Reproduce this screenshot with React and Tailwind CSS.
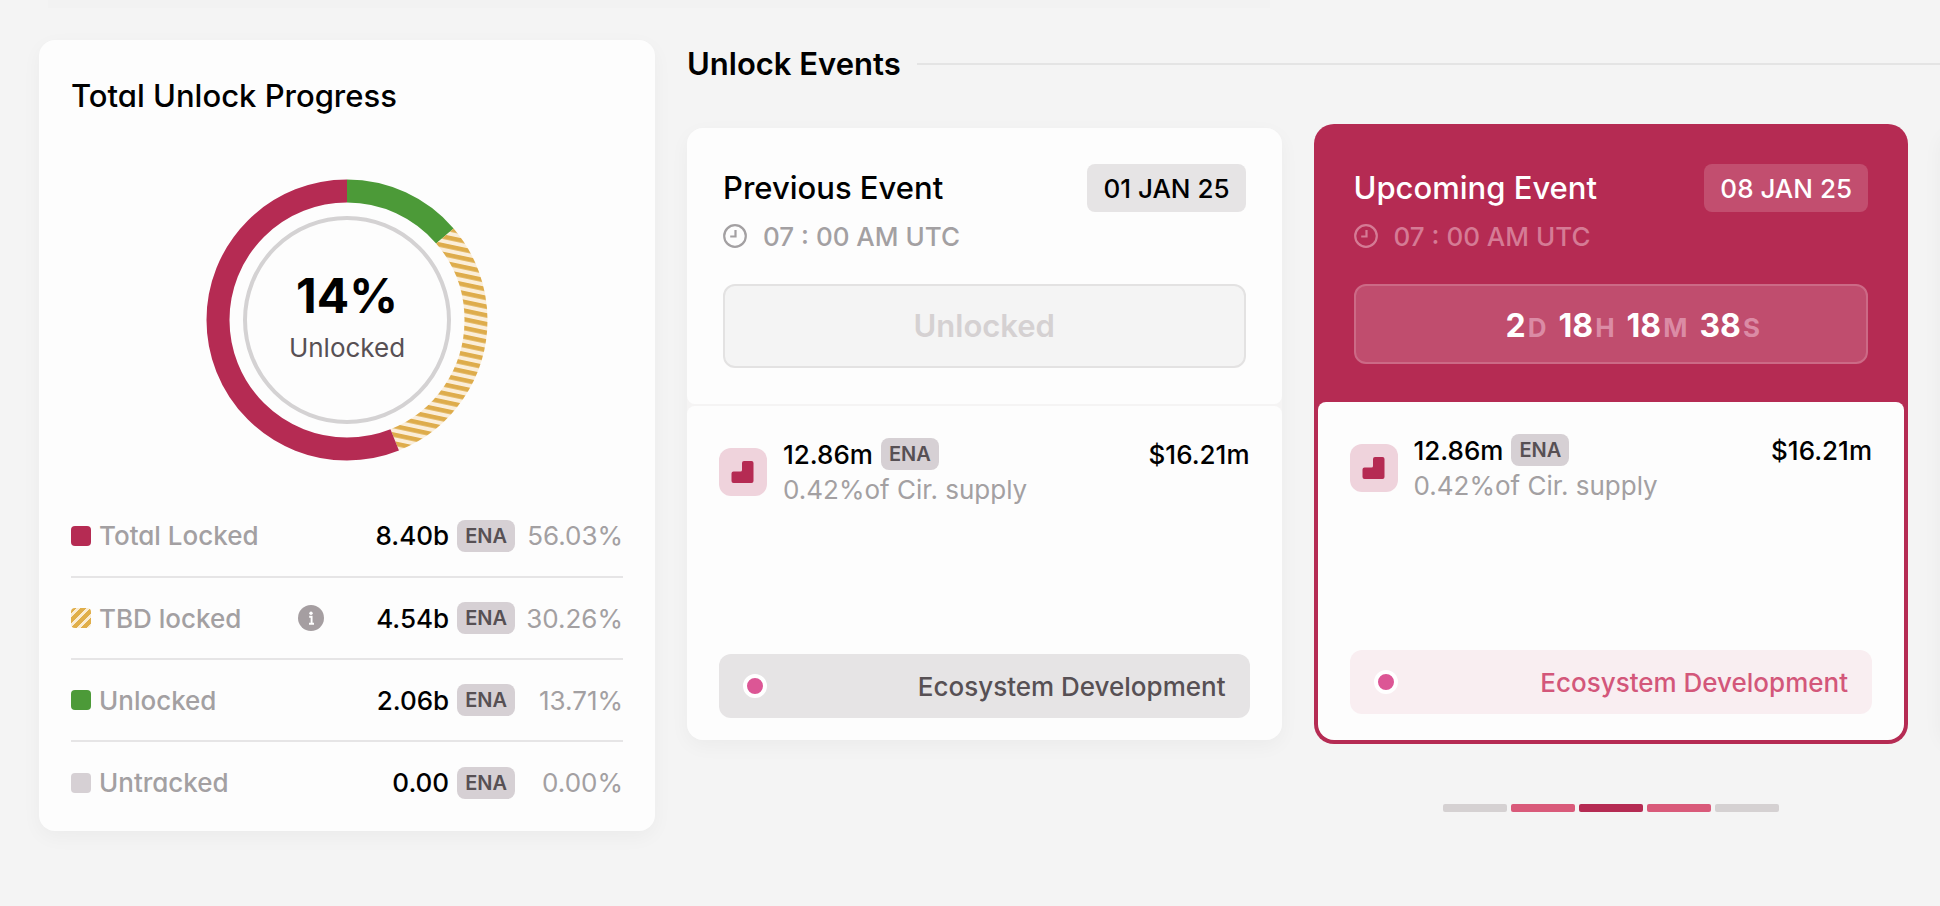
const rows = [
  { label: "Total Locked", value: "8.40b", pct: "56.03%", swatch: "bg-[#b52b53]" },
  {
    label: "TBD locked",
    value: "4.54b",
    pct: "30.26%",
    swatch: "bg-[repeating-linear-gradient(135deg,#e0ae4a_0px,#e0ae4a_4px,#faecd4_4px,#faecd4_7px)]",
    info: true,
  },
  { label: "Unlocked", value: "2.06b", pct: "13.71%", swatch: "bg-[#4c9a38]" },
  { label: "Untracked", value: "0.00", pct: "0.00%", swatch: "bg-[#d6d0d4]" },
];

const pages = ["bg-[#d5d1d2]", "bg-[#d95a7a]", "bg-[#b52b53]", "bg-[#d95a7a]", "bg-[#d5d1d2]"];

function Badge() {
  return (
    <span className="flex h-8 items-center rounded-lg bg-[#d6d0d4] px-2 text-xl font-semibold text-[#575054]">
      ENA
    </span>
  );
}

function Arc({ from, to, color }) {
  const gap = 100 - (to - from);
  return (
    <circle
      cx="142"
      cy="141"
      r="129"
      fill="none"
      stroke={color}
      strokeWidth="23"
      pathLength="100"
      strokeDasharray={`${to - from} ${gap}`}
      strokeDashoffset={-from}
      transform="rotate(-90 142 141)"
    />
  );
}

function Donut() {
  return (
    <div className="grid place-items-center">
      <svg className="col-start-1 row-start-1" width="284" height="282" viewBox="0 0 284 282" aria-hidden="true">
        <defs>
          <pattern id="stripes" width="8.5" height="8.5" patternUnits="userSpaceOnUse" patternTransform="rotate(102)">
            <rect width="8.5" height="8.5" fill="#fbeed9" />
            <rect width="8.5" height="4.5" fill="#deac4b" />
          </pattern>
        </defs>
        <Arc from={0} to={13.71} color="#4c9a38" />
        <Arc from={13.71} to={43.97} color="url(#stripes)" />
        <Arc from={43.97} to={100} color="#b52b53" />
        <circle cx="142" cy="141" r="102" fill="none" stroke="#d4d2d3" strokeWidth="4" />
      </svg>
      <div className="col-start-1 row-start-1 flex flex-col items-center">
        <span className="text-5xl leading-14 font-bold">14%</span>
        <span className="text-[26px] leading-12 text-[#575054]">Unlocked</span>
      </div>
    </div>
  );
}

function InfoIcon() {
  return (
    <svg width="26" height="26" viewBox="0 0 26 26" aria-hidden="true">
      <circle cx="13" cy="13" r="13" fill="#a59ea1" />
      <circle cx="13" cy="8.3" r="1.7" fill="#fff" />
      <path d="M11.2 11.8h2.4v6.2M11 18.7h5" fill="none" stroke="#fff" strokeWidth="1.9" />
    </svg>
  );
}

function ClockIcon() {
  return (
    <svg width="24" height="24" viewBox="0 0 24 24" fill="none" stroke="currentColor" strokeWidth="2.2" aria-hidden="true">
      <circle cx="12" cy="12" r="10.8" />
      <path d="M12.5 6v6.5H7.2" />
    </svg>
  );
}

function AllocationIcon() {
  return (
    <span className="flex size-12 items-center justify-center rounded-xl bg-[#efd3dc]">
      <svg width="24" height="24" viewBox="0 0 24 24" fill="#b52b53" aria-hidden="true">
        <path d="M13 1h7.5a2 2 0 0 1 2 2v18a2 2 0 0 1-2 2h-18a2 2 0 0 1-2-2v-7.5a2 2 0 0 1 2-2h7a1.500 1.500 0 0 0 1.500-1.500V3a2 2 0 0 1 2-2z" />
      </svg>
    </span>
  );
}

function Allocation({ bar, text }) {
  return (
    <>
      <div className="flex items-center gap-4">
        <AllocationIcon />
        <div className="flex-1">
          <div className="flex h-9 items-center gap-2">
            <span className="text-[26px] font-medium">12.86m</span>
            <Badge />
            <span className="ml-auto text-[26px] font-medium">$16.21m</span>
          </div>
          <div className="text-[26px] leading-9 text-[#a3a0a2]">0.42%of Cir. supply</div>
        </div>
      </div>
      <div className={`mt-auto flex h-16 items-center justify-between rounded-xl px-6 ${bar}`}>
        <span className="size-6 rounded-full border-4 border-white bg-[#dc5695]" />
        <span className={`text-[26px] font-medium ${text}`}>Ecosystem Development</span>
      </div>
    </>
  );
}

function EventHead({ title, date, dateStyle, timeStyle }) {
  return (
    <>
      <div className="flex items-center justify-between">
        <h3 className="text-[31px] leading-12 font-medium">{title}</h3>
        <span className={`flex h-12 items-center rounded-lg px-4 text-[26px] font-medium ${dateStyle}`}>{date}</span>
      </div>
      <div className={`flex h-12 items-center gap-4 text-[26px] font-medium ${timeStyle}`}>
        <ClockIcon />
        07 : 00 AM UTC
      </div>
    </>
  );
}

export default function App() {
  return (
    <div className="min-h-screen overflow-hidden bg-[#f4f4f4] font-['Inter','Liberation_Sans',sans-serif] text-black [font-feature-settings:'cv11']">
      <div className="ml-12 h-2 w-[63%] bg-[#f2f2f2]" />
      <main className="flex items-start gap-8 pt-8 pl-[39px]">
        <section className="w-[616px] shrink-0 rounded-2xl bg-[#fdfdfd] px-8 pt-8 pb-2 shadow-[0_6px_20px_rgba(0,0,0,0.04)]">
          <h2 className="text-[31px] leading-12 font-medium">Total Unlock Progress</h2>
          <div className="pt-[59px] pb-[34px]">
            <Donut />
          </div>
          <table className="w-full text-[26px]">
            <tbody>
              {rows.map((r) => (
                <tr key={r.label} className="h-[82px] border-b-2 border-[#e6e5e6] last:border-0">
                  <th scope="row" className="w-[227px] p-0 text-left font-medium text-[#a3a0a2]">
                    <span className="flex items-center gap-2">
                      <span className={`size-5 rounded ${r.swatch}`} />
                      {r.label}
                    </span>
                  </th>
                  <td className="p-0">
                    {r.info && (
                      <button type="button" aria-label="About TBD locked" className="block">
                        <InfoIcon />
                      </button>
                    )}
                  </td>
                  <td className="w-[190px] p-0 font-medium">
                    <span className="flex items-center justify-end gap-2">
                      {r.value}
                      <Badge />
                    </span>
                  </td>
                  <td className="w-[108px] p-0 text-right text-[#a3a0a2]">{r.pct}</td>
                </tr>
              ))}
            </tbody>
          </table>
        </section>

        <section className="min-w-0 flex-1">
          <div className="flex items-center gap-4">
            <h2 className="text-[31px] leading-12 font-semibold">Unlock Events</h2>
            <div className="h-[2px] flex-1 bg-[#e4e4e4]" />
          </div>
          <div className="flex gap-8 pt-9">
            <article className="mt-1 flex h-[612px] min-w-0 flex-1 flex-col gap-[2px] rounded-2xl bg-[#f5f4f4] shadow-[0_6px_20px_rgba(0,0,0,0.04)]">
              <div className="h-[276px] rounded-t-2xl rounded-b-lg bg-[#fdfdfd] px-9 pt-9">
                <EventHead title="Previous Event" date="01 JAN 25" dateStyle="bg-[#e6e4e5]" timeStyle="text-[#a3a0a2]" />
                <div className="mt-6 flex h-[84px] items-center justify-center rounded-xl border-2 border-[#e3e2e2] bg-[#f4f4f4] text-[31px] font-semibold text-[#d5d1d2]">
                  Unlocked
                </div>
              </div>
              <div className="flex flex-1 flex-col rounded-t-lg rounded-b-2xl bg-[#fdfdfd] px-8 pt-[30px] pb-[22px]">
                <Allocation bar="bg-[#e6e4e5]" text="text-[#575054]" />
              </div>
            </article>

            <div className="min-w-0 flex-1">
              <article className="flex h-[620px] flex-col rounded-[20px] bg-[#b52b53] p-1">
                <div className="h-[274px] px-9 pt-9 text-white">
                  <EventHead title="Upcoming Event" date="08 JAN 25" dateStyle="bg-[#c24e6f]" timeStyle="text-[#d57b95]" />
                  <div
                    role="timer"
                    className="mt-6 flex h-20 items-center justify-center gap-3 rounded-xl border-2 border-[#cc6a86] bg-[#c04d6e] pt-1 pl-11"
                  >
                    {[
                      ["2", "D"],
                      ["18", "H"],
                      ["18", "M"],
                      ["38", "S"],
                    ].map(([n, u]) => (
                      <span key={u} className="flex items-baseline gap-0.5">
                        <span className="text-[32px] font-bold">{n}</span>
                        <span className="text-[26px] font-bold text-[#db8ba5]">{u}</span>
                      </span>
                    ))}
                  </div>
                </div>
                <div className="flex flex-1 flex-col rounded-t-lg rounded-b-2xl bg-[#fdfdfd] px-8 pt-[30px] pb-[26px]">
                  <Allocation bar="bg-[#f9eef1]" text="text-[#d3577a]" />
                </div>
              </article>
              <div className="flex justify-center gap-1 pt-[60px]">
                {pages.map((c, i) => (
                  <button key={i} type="button" aria-label={`Event ${i + 1}`} className={`h-2 w-16 rounded-[2px] ${c}`} />
                ))}
              </div>
            </div>

            <div className="mt-1 -mr-16 h-[612px] w-16 shrink-0 rounded-2xl bg-[#fdfdfd] shadow-[0_6px_20px_rgba(0,0,0,0.04)]" />
          </div>
        </section>
      </main>
    </div>
  );
}
